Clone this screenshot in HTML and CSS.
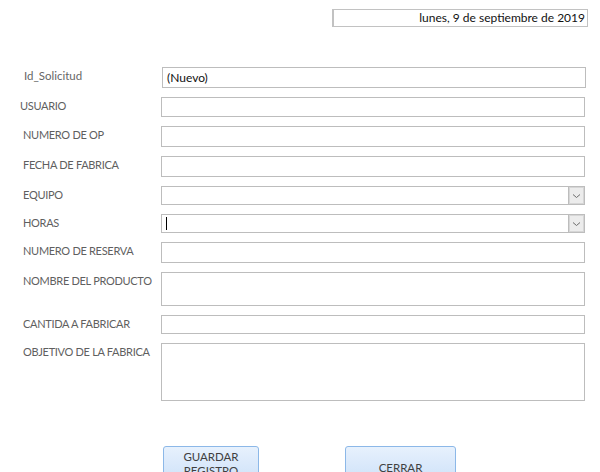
FILE: index.html
```html
<!DOCTYPE html>
<html lang="es">
<head>
<meta charset="utf-8">
<title>Solicitud</title>
<link rel="stylesheet" href="styles.css">
</head>
<body>
<div class="page">
  <div class="topbar">
    <div class="datebox">lunes, 9 de septiembre de 2019</div>
  </div>

  <div class="form">
    <div class="row r-id">
      <label class="lbl lbl-id">Id_Solicitud</label>
      <div class="field h21"><span class="val">(Nuevo)</span></div>
    </div>
    <div class="row">
      <label class="lbl lbl-user">USUARIO</label>
      <div class="field h20"></div>
    </div>
    <div class="row">
      <label class="lbl">NUMERO DE OP</label>
      <div class="field h21"></div>
    </div>
    <div class="row">
      <label class="lbl">FECHA DE FABRICA</label>
      <div class="field h21"></div>
    </div>
    <div class="row">
      <label class="lbl">EQUIPO</label>
      <div class="field combo h19">
        <span class="val"></span>
        <span class="drop"><svg width="9" height="6" viewBox="0 0 9 6"><path d="M1 1.5 L4.5 4.5 L8 1.5" fill="none" stroke="#6d6d6d" stroke-width="1"/></svg></span>
      </div>
    </div>
    <div class="row">
      <label class="lbl">HORAS</label>
      <div class="field combo h19">
        <span class="val"><span class="caret"></span></span>
        <span class="drop"><svg width="9" height="6" viewBox="0 0 9 6"><path d="M1 1.5 L4.5 4.5 L8 1.5" fill="none" stroke="#6d6d6d" stroke-width="1"/></svg></span>
      </div>
    </div>
    <div class="row">
      <label class="lbl">NUMERO DE RESERVA</label>
      <div class="field h21"></div>
    </div>
    <div class="row">
      <label class="lbl">NOMBRE DEL PRODUCTO</label>
      <div class="field h34"></div>
    </div>
    <div class="row">
      <label class="lbl">CANTIDA A FABRICAR</label>
      <div class="field h19"></div>
    </div>
    <div class="row">
      <label class="lbl">OBJETIVO DE LA FABRICA</label>
      <div class="field h58"></div>
    </div>
  </div>

  <div class="actions">
    <button class="btn btn-save">GUARDAR<br>REGISTRO</button>
    <button class="btn btn-close">CERRAR</button>
  </div>
</div>
</body>
</html>
```

FILE: styles.css
```css
html, body {
  margin: 0;
  padding: 0;
  background: #ffffff;
}
body {
  width: 600px;
  height: 472px;
  overflow: hidden;
  font-family: Lato, "Open Sans", "Liberation Sans", sans-serif;
  font-size: 12px;
  color: #595959;
}
.page {
  display: flex;
  flex-direction: column;
}
.topbar {
  display: flex;
  justify-content: flex-end;
  padding: 9px 12px 0 0;
}
.datebox {
  width: 251px;
  height: 16px;
  border: 1px solid #c2c2c2;
  border-left-width: 2px;
  text-align: right;
  padding-right: 2px;
  line-height: 16px;
  color: #111;
  font-size: 12px;
}
.form {
  display: flex;
  flex-direction: column;
  gap: 9px;
  margin-top: 40px;
}
.row {
  display: flex;
  align-items: flex-start;
}
.lbl {
  width: 138px;
  padding-left: 23px;
  padding-top: 2px;
  line-height: 14px;
  font-size: 11px;
  letter-spacing: -0.3px;
  color: #5f5f5f;
  white-space: nowrap;
}
.lbl-id { padding-left: 24px; padding-top: 2px; color: #666; letter-spacing: 0; font-size: 11.5px; }
.lbl-user { padding-left: 20px; width: 141px; }
.field {
  width: 424px;
  border: 1px solid #bdbdbd;
  box-sizing: border-box;
  display: flex;
  align-items: center;
  background: #fff;
}
.h19 { height: 19px; }
.h20 { height: 20px; }
.h21 { height: 21px; }
.h34 { height: 34px; }
.h58 { height: 58px; }
.val {
  flex: 1;
  padding-left: 4px;
  color: #111;
  font-size: 12px;
  display: flex;
  align-items: center;
}
.caret {
  display: inline-block;
  width: 1px;
  height: 13px;
  background: #000;
}
.combo .drop {
  width: 15px;
  height: 17px;
  border-left: 1px solid #bdbdbd;
  background: #ececec;
  box-shadow: inset 0 0 0 1px #d6d6d6;
  display: flex;
  align-items: center;
  justify-content: center;
}
.actions {
  display: flex;
  gap: 86px;
  padding-left: 163px;
  margin-top: 45px;
}
.btn {
  font-family: inherit;
  font-size: 11.5px;
  color: #404040;
  border: 1px solid #8cb8e8;
  border-radius: 3px;
  background: linear-gradient(#e7f1fd, #c8def8);
  line-height: 14px;
  padding: 0;
  height: 44px;
}
.btn-save { width: 96px; padding-top: 3px; align-self: flex-start; display: flex; flex-direction: column; align-items: center; justify-content: flex-start; }
.btn-close { width: 111px; }
```
